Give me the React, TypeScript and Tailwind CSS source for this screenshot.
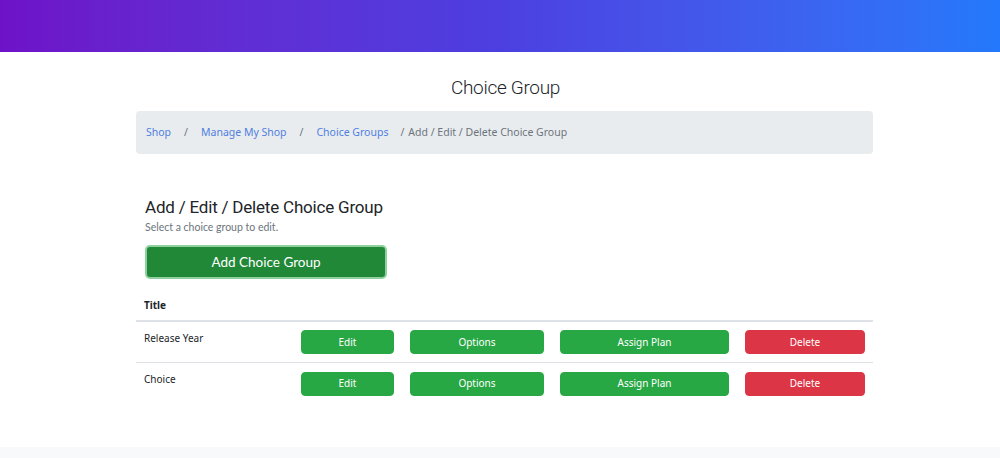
const rows = ["Release Year", "Choice"];

function RowButton({ label, width, tone = "green" }: { label: string; width: string; tone?: "green" | "red" }) {
  const color = tone === "red" ? "bg-[#dc3545] border-[#dc3545]" : "bg-[#28a745] border-[#28a745]";
  return (
    <button className={`${color} ${width} h-6 shrink-0 rounded-[4px] border text-[10px] text-white`}>
      {label}
    </button>
  );
}

export default function App() {
  return (
    <div className="min-h-[458px] bg-white font-['Noto_Sans',sans-serif] text-[#212529]">
      <header className="h-[52px] bg-gradient-to-r from-[#6e12c8] via-[#4c3fe0] to-[#2379fb]" />

      <main className="ml-[136px] w-[737px] pb-[43px]">
        <h1 className="pt-[21px] pl-[2px] text-center font-['Roboto',sans-serif] text-[19px] font-light leading-[30px] tracking-[-0.3px] text-[#212529]">
          Choice Group
        </h1>

        <nav className="mt-[8px] flex h-[43px] items-center rounded-[4px] bg-[#e9ecef] px-[10px] text-[10.5px] text-[#6c757d]">
          <a className="text-[#4f7fe0]">Shop</a>
          <span className="px-[13px]">/</span>
          <a className="text-[#4f7fe0]">Manage My Shop</a>
          <span className="px-[13px]">/</span>
          <a className="text-[#4f7fe0]">Choice Groups</a>
          <span className="pl-[12px] pr-[4px]">/</span>
          <span>Add / Edit / Delete Choice Group</span>
        </nav>

        <section className="px-[9px] pt-[42px]">
          <h2 className="font-['Roboto',sans-serif] text-[17px] leading-[22px] tracking-[-0.2px] text-[#212529]">
            Add / Edit / Delete Choice Group
          </h2>
          <p className="mt-[3px] font-['Lato',sans-serif] text-[10.5px] leading-[13px] text-[#6c757d]">
            Select a choice group to edit.
          </p>
          <button className="mt-[11px] h-[34px] w-[242px] rounded-[5px] border-2 border-[#8fd19e] bg-[#218838] font-['Lato',sans-serif] text-[13.5px] text-white">
            Add Choice Group
          </button>
        </section>

        <div className="mt-[17px]">
          <div className="flex h-[26px] items-center border-b-2 border-[#dee2e6] px-2 pb-[6px] text-[10px] font-bold">
            Title
          </div>
          {rows.map((title, i) => (
            <div
              key={title}
              className={`flex h-[41px] items-center px-2 text-[10px] ${i === 0 ? "border-b border-[#dee2e6]" : ""}`}
            >
              <span className="-mt-2 w-[157px] shrink-0">{title}</span>
              <div className="flex gap-4">
                <RowButton label="Edit" width="w-[93px]" />
                <RowButton label="Options" width="w-[134px]" />
                <RowButton label="Assign Plan" width="w-[169px]" />
                <RowButton label="Delete" width="w-[120px]" tone="red" />
              </div>
            </div>
          ))}
        </div>
      </main>

      <footer className="h-[11px] bg-[#f8f9fa]" />
    </div>
  );
}
